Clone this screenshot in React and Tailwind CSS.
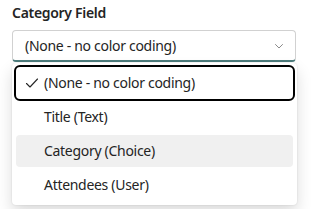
import { useState } from "react";

const FIELDS = [
  { id: "none", label: "(None - no color coding)" },
  { id: "title", label: "Title (Text)" },
  { id: "category", label: "Category (Choice)" },
  { id: "attendees", label: "Attendees (User)" },
];

function Check() {
  return (
    <svg width="16" height="16" viewBox="0 0 16 16" fill="none">
      <path
        d="M2.5 8.5l3.5 3.5 7.5-8"
        stroke="#242424"
        strokeWidth="1.1"
        strokeLinecap="round"
        strokeLinejoin="round"
      />
    </svg>
  );
}

function Chevron() {
  return (
    <svg width="12" height="12" viewBox="0 0 12 12" fill="none">
      <path
        d="M2.5 4.5L6 8l3.5-3.5"
        stroke="#8a8a8a"
        strokeWidth="1"
        strokeLinecap="round"
        strokeLinejoin="round"
      />
    </svg>
  );
}

export default function App() {
  const [selected] = useState("none");
  const hovered = "category";

  return (
    <div
      className="w-[312px] h-[209px] bg-white px-[12px] pt-[3px] text-[#242424] tracking-[-0.3px] overflow-hidden"
      style={{ fontFamily: '"Segoe UI", "Noto Sans", sans-serif' }}
    >
      <p className="text-[14px] leading-[20px] font-semibold">Category Field</p>
      <div className="mt-[7px] h-[32px] w-[284px] flex items-center justify-between border border-[#d1d1d1] border-b-2 border-b-[#4d7c7c] rounded-[4px] pl-[12px] pr-[10px]">
        <span className="text-[14px] leading-[20px]">
          (None - no color coding)
        </span>
        <Chevron />
      </div>
      <div className="mt-[1px] w-[285px] bg-white rounded-[4px] p-[4px] flex flex-col gap-[2px] shadow-[0_0_2px_rgba(0,0,0,0.12),0_8px_16px_rgba(0,0,0,0.14)]">
        {FIELDS.map((f, i) => (
          <div
            key={f.id}
            className={`h-[32px] flex items-center gap-[4px] pl-[8px] rounded-[4px] text-[14px] leading-[20px] ${
              f.id === hovered ? "bg-[#f0f0f0]" : ""
            } ${i === 0 ? "outline-2 outline-black" : ""}`}
          >
            <span className="w-[16px] h-[16px] flex items-center justify-center">
              {f.id === selected && <Check />}
            </span>
            <span>{f.label}</span>
          </div>
        ))}
      </div>
    </div>
  );
}
